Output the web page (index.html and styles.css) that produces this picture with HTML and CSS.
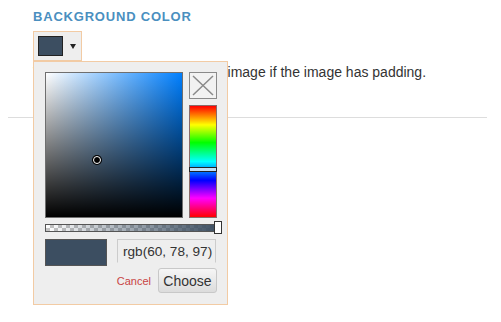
FILE: index.html
```html
<!DOCTYPE html>
<html lang="en">
<head>
  <meta charset="UTF-8">
  <link rel="stylesheet" href="styles.css">
</head>
<body>
  <div class="page">
    <div class="field">
      <h4 class="field-label">Background color</h4>
      <div class="picker">
        <button class="picker-toggle" type="button">
          <span class="picker-swatch"></span>
          <span class="picker-caret"></span>
        </button>
        <div class="picker-popup">
          <div class="picker-top">
            <div class="sat-area">
              <span class="sat-dot"></span>
            </div>
            <div class="picker-side">
              <div class="no-color">
                <svg width="26" height="25" viewBox="0 0 26 25">
                  <path d="M3 3 L23 22 M23 3 L3 22" stroke="#8a8a8a" stroke-width="1.5" fill="none"/>
                </svg>
              </div>
              <div class="hue-bar">
                <span class="hue-handle"></span>
              </div>
            </div>
          </div>
          <div class="alpha-bar">
            <span class="alpha-handle"></span>
          </div>
          <div class="picker-value">
            <span class="value-preview"></span>
            <input class="value-input" type="text" value="rgb(60, 78, 97)">
          </div>
          <div class="picker-actions">
            <a class="cancel-link" href="#">Cancel</a>
            <button class="choose-btn" type="button">Choose</button>
          </div>
        </div>
      </div>
      <p class="field-help">The color to display behind the image if the image has padding.</p>
    </div>
    <hr class="divider">
  </div>
</body>
</html>
```

FILE: styles.css
```css
* {
  box-sizing: border-box;
}
html {
  height: 100%;
}
body {
  min-height: 100%;
  margin: 0;
  font-family: "Liberation Sans", Arial, sans-serif;
  color: #333;
  background: #fff;
}
.page {
  min-height: 322px;
  padding: 9px 14px 0 8px;
}
.field {
  padding-left: 25px;
}
.field-label {
  margin: 0 0 6px;
  font-size: 13px;
  line-height: 16px;
  font-weight: bold;
  letter-spacing: 0.8px;
  text-transform: uppercase;
  color: #4a8fbf;
}
/* color picker */
.picker {
  position: relative;
  display: inline-block;
  vertical-align: top;
}
.picker-toggle {
  display: flex;
  align-items: center;
  width: 49px;
  height: 30px;
  margin: 0;
  padding: 0 5px 0 4px;
  border: 1px solid #f2cba4;
  background: #eee;
  font: inherit;
}
.picker-swatch {
  width: 25px;
  height: 20px;
  border: 1px solid #222;
  background: rgb(60, 78, 97);
}
.picker-caret {
  margin-left: 7px;
  border-left: 3px solid transparent;
  border-right: 3px solid transparent;
  border-top: 5px solid #222;
}
.picker-popup {
  position: absolute;
  top: 100%;
  left: 0;
  z-index: 10;
  width: 195px;
  height: 244px;
  padding: 10px 10px 11px 11px;
  border: 1px solid #f2cba4;
  background: #eee;
}
.picker-top {
  display: flex;
  gap: 6px;
}
.sat-area {
  position: relative;
  width: 138px;
  height: 146px;
  border: 1px solid #6f6f6f;
  background:
    linear-gradient(to top, #000, rgba(0, 0, 0, 0)),
    linear-gradient(to right, #fff, hsl(210, 100%, 50%));
}
.sat-dot {
  position: absolute;
  left: 47px;
  top: 83px;
  width: 8px;
  height: 8px;
  border: 1.5px solid #fff;
  border-radius: 50%;
  background: #000;
  box-shadow: 0 0 0 1px #000;
}
.picker-side {
  display: flex;
  flex-direction: column;
  gap: 6px;
  width: 28px;
}
.no-color {
  height: 27px;
  border: 1px solid #8a8a8a;
  background: #f2f2f2;
}
.no-color svg {
  display: block;
}
.hue-bar {
  position: relative;
  flex: 1;
  border: 1px solid #8a6a6a;
  background: linear-gradient(to bottom, #f00 0%, #ff0 17%, #0f0 33%, #0ff 50%, #00f 67%, #f0f 83%, #f00 100%);
}
.hue-handle {
  position: absolute;
  left: -1px;
  right: -1px;
  top: 61px;
  height: 5px;
  border: 1px solid #222;
  background: #bfe0f7;
}
.alpha-bar {
  position: relative;
  width: 176px;
  height: 8px;
  margin-top: 6px;
  border: 1px solid #555;
  background:
    linear-gradient(to right, rgba(60, 78, 97, 0), rgb(60, 78, 97)),
    repeating-conic-gradient(#c4c4c4 0 25%, #fff 0 50%) 0 0 / 8px 6px;
}
.alpha-handle {
  position: absolute;
  right: -2px;
  top: -4px;
  width: 8px;
  height: 13px;
  border: 1px solid #333;
  background: #fff;
}
.picker-value {
  display: flex;
  align-items: flex-start;
  gap: 10px;
  margin-top: 7px;
}
.value-preview {
  width: 62px;
  height: 27px;
  border: 1px solid #555;
  background: rgb(60, 78, 97);
}
.value-input {
  width: 99px;
  height: 24px;
  margin: 0;
  padding: 0 0 0 5px;
  border: 1px solid #ccc;
  border-bottom-color: #eee;
  background: #eee;
  font: 13.6px "Liberation Sans", Arial, sans-serif;
  color: #333;
}
.picker-actions {
  display: flex;
  justify-content: flex-end;
  align-items: center;
  gap: 7px;
  margin-top: 2px;
}
.cancel-link {
  font-size: 11px;
  color: #c94444;
  text-decoration: none;
}
.choose-btn {
  width: 59px;
  height: 25px;
  margin: 0;
  padding: 0;
  border: 1px solid #c8c8c8;
  border-radius: 3px;
  background: linear-gradient(#f6f6f6, #dcdcdc);
  font: 14px "Liberation Sans", Arial, sans-serif;
  color: #333;
}
.field-help {
  margin: 1px 0 0;
  font-size: 14px;
  line-height: 20px;
}
.divider {
  margin: 35px 0 0;
  border: 0;
  border-top: 1px solid #ddd;
}
```
